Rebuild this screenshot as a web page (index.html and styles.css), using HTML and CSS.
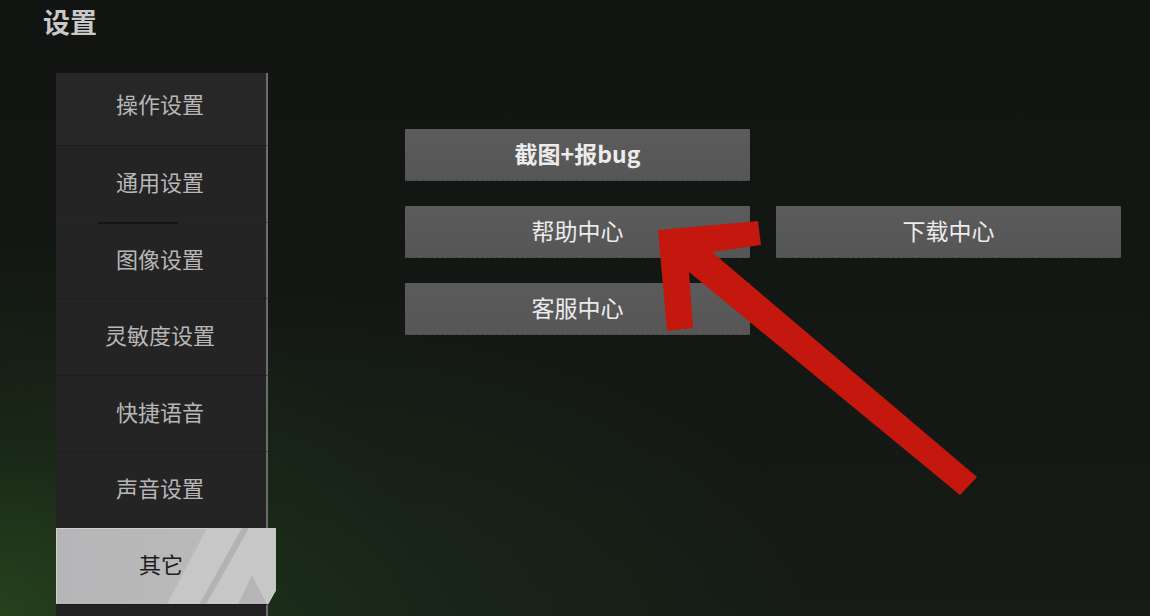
FILE: index.html
```html
<!DOCTYPE html>
<html lang="zh-CN">
<head>
<meta charset="utf-8">
<title>设置</title>
<link rel="stylesheet" href="styles.css">
</head>
<body>
<div class="screen">
  <h1 class="title">设置</h1>
  <div class="main">
    <nav class="sidebar">
      <div class="nav-item first">操作设置</div>
      <div class="nav-item">通用设置</div>
      <div class="nav-item sep-short">图像设置</div>
      <div class="nav-item">灵敏度设置</div>
      <div class="nav-item">快捷语音</div>
      <div class="nav-item">声音设置</div>
      <div class="nav-item active">
        <svg class="stripes" viewBox="0 0 220 76" preserveAspectRatio="none" aria-hidden="true">
          <polygon points="151,0 220,0 220,76 111,76" fill="#c7c7c7"/>
          <polygon points="186,0 193,0 150,76 143,76" fill="#b3b3b3"/>
          <polygon points="196,47 182,76 211,76" fill="#b5b5b5"/>
        </svg>
        <span class="label">其它</span>
      </div>
      <div class="nav-item tail"></div>
    </nav>
    <section class="content">
      <button class="btn bold">截图+报bug</button>
      <span class="cell"></span>
      <button class="btn">帮助中心</button>
      <button class="btn">下载中心</button>
      <button class="btn">客服中心</button>
    </section>
  </div>
  <svg class="arrow" viewBox="0 0 1150 616" aria-hidden="true">
    <polygon points="658,230 758,221 761,245 712,252 977,477 960,495 689,272 693,328 667,331" fill="#c4170e"/>
  </svg>
</div>
</body>
</html>
```

FILE: styles.css
```css
* { box-sizing: border-box; }

html, body {
  margin: 0;
  padding: 0;
  background: #131613;
}

.screen {
  position: relative;
  width: 1150px;
  height: 616px;
  overflow: hidden;
  font-family: "Noto Sans CJK SC", "Noto Sans", sans-serif;
  background:
    radial-gradient(ellipse 420px 380px at 0% 100%, rgba(42, 74, 30, 0.8) 0%, rgba(30, 55, 25, 0.4) 45%, rgba(20, 30, 20, 0) 100%),
    radial-gradient(ellipse 520px 320px at 25% 100%, rgba(30, 52, 28, 0.55) 0%, rgba(20, 30, 20, 0) 100%),
    linear-gradient(180deg, #111411 0%, #141814 60%, #161b16 100%);
}

.title {
  margin: 0;
  padding: 9px 0 0 43px;
  height: 37px;
  font-size: 27px;
  line-height: 26px;
  font-weight: 700;
  color: #c9c9c9;
}

.main {
  display: flex;
  margin-top: 36px;
}

.sidebar {
  margin-left: 56px;
  width: 220px;
  display: flex;
  flex-direction: column;
}

.nav-item {
  position: relative;
  width: 212px;
  height: 76.5px;
  line-height: 70px;
  text-align: center;
  font-size: 22px;
  color: #b7b7b7;
  background: #242424;
  border-right: 2px solid #6c6c6c;
  border-top: 1px solid #1e1e1e;
  padding-right: 2px;
}

.nav-item.first {
  height: 72px;
  line-height: 61px;
  border-top: none;
  background: #272727;
}

.nav-item.sep-short {
  border-top: 1px solid #262626;
}

.nav-item.sep-short::before {
  content: "";
  position: absolute;
  left: 42px;
  top: -1px;
  width: 80px;
  height: 2px;
  background: #141414;
}

.nav-item.active {
  width: 220px;
  border: none;
  padding-right: 10px;
  color: #1c1c1c;
  background: linear-gradient(90deg, #b6b6b8 0%, #bbbbbb 100%);
  clip-path: polygon(0 0, 100% 0, 100% 82%, 96.5% 100%, 0 100%);
  box-shadow: inset 1px 1px 0 #cfcfcf;
}

.stripes {
  position: absolute;
  inset: 0;
  width: 100%;
  height: 100%;
}

.label {
  position: relative;
}

.nav-item.tail {
  height: 40px;
  border-top: 1px solid #1a1a1a;
  background: #222222;
}

.content {
  margin-left: 129px;
  padding-top: 56px;
  display: grid;
  grid-template-columns: 345px 345px;
  grid-auto-rows: 52px;
  column-gap: 26px;
  row-gap: 25px;
  align-content: start;
}

.btn {
  margin: 0;
  border: none;
  border-bottom: 1px dashed #4a4a4a;
  border-radius: 1px;
  background: linear-gradient(180deg, #5b5b5b 0%, #565656 100%);
  color: #ececec;
  font-family: "Noto Sans CJK SC", "Noto Sans", sans-serif;
  font-size: 23px;
  line-height: 46px;
  padding: 0 0 4px;
}

.btn.bold {
  font-weight: 700;
  font-size: 23px;
}

.arrow {
  position: absolute;
  left: 0;
  top: 0;
  width: 1150px;
  height: 616px;
  pointer-events: none;
}
```
